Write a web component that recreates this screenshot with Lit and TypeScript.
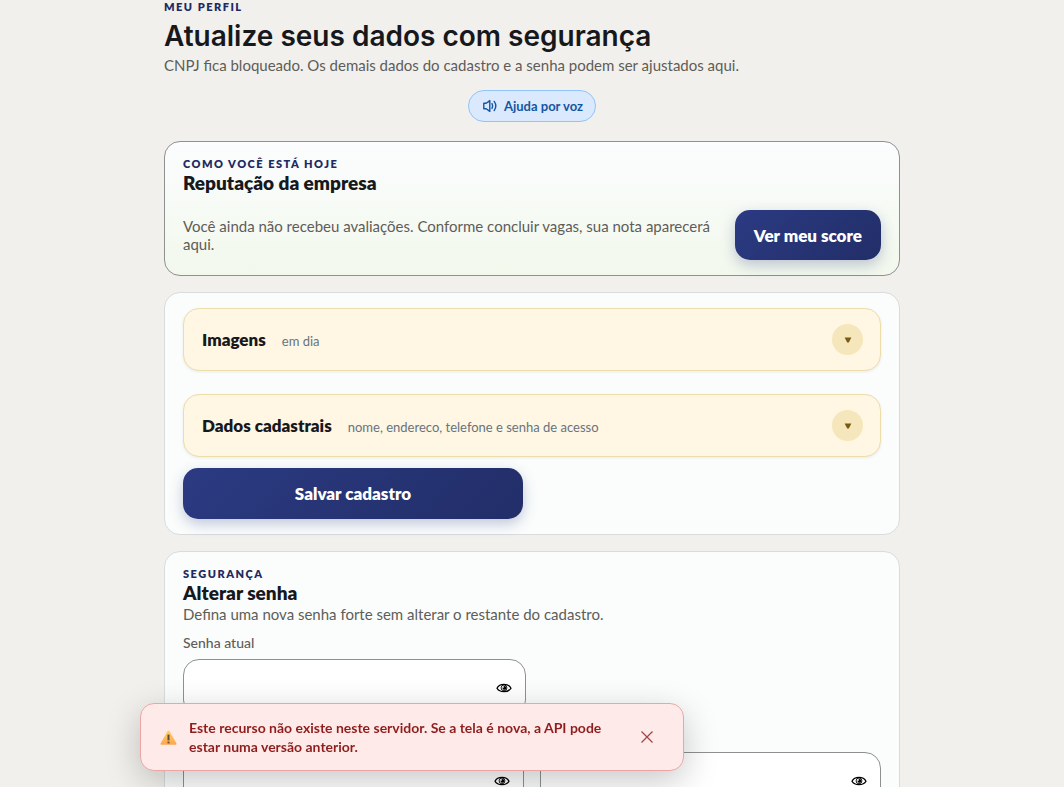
import { LitElement, html, css, svg, nothing } from "lit";
import { customElement, property, state } from "lit/decorators.js";

const speakerIcon = svg`<svg class="speaker" viewBox="0 0 16 16" width="16" height="16" fill="none" stroke="currentColor" stroke-width="1.4" stroke-linejoin="round" stroke-linecap="round" aria-hidden="true"><path d="M1.8 5.3H4.2L7.8 2.6V13.4L4.2 10.7H1.8Z"/><path d="M10 5.6Q11.4 8 10 10.4"/><path d="M12.2 3.4Q15.4 8 12.2 12.6"/></svg>`;

const eyeIcon = svg`<svg viewBox="0 0 16 10" width="16" height="10" aria-hidden="true"><path d="M1 5.2C3.6 0.2 12.4 0.2 15 5.2C12.4 9.8 3.6 9.8 1 5.2Z" fill="#fff" stroke="#000" stroke-width="1.3"/><circle cx="8" cy="4.9" r="2.9" fill="#fff" stroke="#000" stroke-width="0.9"/><circle cx="8.4" cy="4.9" r="1.9" fill="#000"/><circle cx="7.2" cy="4" r="0.8" fill="#fff"/></svg>`;

const warningIcon = svg`<svg viewBox="0 0 17 15" width="17" height="15" aria-hidden="true"><defs><linearGradient id="warn" x1="0" y1="0" x2="0" y2="1"><stop offset="0" stop-color="#ffd261"/><stop offset="1" stop-color="#ffa550"/></linearGradient></defs><path d="M8.5 0.4Q9 0.4 9.4 1L16.5 13.6Q16.8 14.6 15.9 14.7H1.1Q0.2 14.6 0.5 13.6L7.6 1Q8 0.4 8.5 0.4Z" fill="url(#warn)"/><path d="M7.5 4.6H9.5V10.4H7.5Z" fill="#5f4c3e"/><path d="M7.5 11.6H9.5V13.4H7.5Z" fill="#5f4c3e"/></svg>`;

const closeIcon = svg`<svg viewBox="0 0 12 12" width="12" height="12" stroke="currentColor" stroke-width="1.2" aria-hidden="true"><path d="M0.5 0.5L11.5 11.5M11.5 0.5L0.5 11.5"/></svg>`;

const base = css`
  *, *::before, *::after { box-sizing: border-box; }
  button, input { font: inherit; }
  button { cursor: pointer; }
  svg { display: block; }
`;

@customElement("accordion-row")
class AccordionRow extends LitElement {
  @property() heading = "";
  @property() hint = "";
  @property({ type: Boolean }) open = false;

  static styles = [base, css`
    :host { display: block; }
    .row {
      display: flex; align-items: center; justify-content: space-between;
      width: 100%; padding: 15px 17px 15px 18px; text-align: left;
      border: 1px solid #eddda9; border-radius: 16px;
      background: #fff6e3; box-shadow: 0 1px 3px rgba(20, 30, 60, 0.08);
    }
    .text { display: flex; align-items: baseline; gap: 16px; }
    .heading { font-size: 17px; font-weight: 800; line-height: 24px; color: #17181c; }
    .hint { font-size: 13px; color: #667480; }
    .mark {
      display: grid; place-items: center; width: 31px; height: 31px;
      border-radius: 50%; background: #f5e7bb; color: #7a5a10;
    }
  `];

  render() {
    return html`<button class="row" type="button" aria-expanded=${this.open ? "true" : "false"} @click=${() => (this.open = !this.open)}>
      <span class="text"><span class="heading">${this.heading}</span><span class="hint">${this.hint}</span></span>
      <span class="mark"><svg viewBox="0 0 8 6" width="8" height="6" aria-hidden="true"><path d="M0.6 0.4H7.4L4.8 5.6H3.2Z" fill="currentColor"/></svg></span>
    </button>`;
  }
}

@customElement("password-field")
class PasswordField extends LitElement {
  @property() label = "";
  @property() name = "";
  @state() private visible = false;

  static styles = [base, css`
    :host { display: block; }
    .label { display: block; height: 16px; margin-bottom: 8px; font-size: 14px; line-height: 16px; font-weight: 500; color: #5e5d59; }
    .box {
      display: flex; align-items: center; height: 57px; padding-right: 5px;
      border: 1px solid #8e9092; border-radius: 16px; background: #fff;
    }
    .input { flex: 1; min-width: 0; height: 100%; padding: 0 16px; border: 0; outline: 0; background: none; }
    .eye { display: grid; place-items: center; width: 32px; height: 32px; padding: 0; border: 0; background: none; }
  `];

  render() {
    return html`<label class="label" for="field">${this.label}</label>
      <div class="box">
        <input class="input" id="field" type=${this.visible ? "text" : "password"} aria-label=${this.name || nothing} />
        <button class="eye" type="button" aria-label="Mostrar senha" @click=${() => (this.visible = !this.visible)}>${eyeIcon}</button>
      </div>`;
  }
}

@customElement("app-root")
class AppRoot extends LitElement {
  @state() private toast = true;

  static styles = [base, css`
    :host {
      display: block; height: 100vh; overflow: hidden; padding: 0 24px;
      background: #f2f0ec; color: #17181c;
      font-family: Lato, "Liberation Sans", sans-serif;
    }
    .page { display: flex; flex-direction: column; gap: 16px; max-width: 736px; margin: 0 auto; }
    h1, h2, p { margin: 0; }
    .head { display: flex; flex-direction: column; padding-bottom: 3px; }
    .eyebrow { font-size: 11px; line-height: 14px; font-weight: 800; letter-spacing: 1.5px; text-transform: uppercase; color: #1d2b63; }
    .title { margin: 4px 0 2px; font-family: Inter, "Liberation Sans", sans-serif; font-size: 28px; line-height: 36px; font-weight: 600; }
    .lead { font-size: 15px; line-height: 18px; color: #5e5d59; }
    .voice {
      display: flex; align-items: center; gap: 6px; align-self: center; height: 32px;
      margin-top: 16px; padding: 0 12px 0 13px; border: 1px solid #90c4f9; border-radius: 16px;
      background: #dbe9fe; color: #1556a0; font-size: 13px; font-weight: 700;
    }
    .card { padding: 15px 18px; border: 1px solid #d9dcdd; border-radius: 16px; background: #fbfdfc; }
    .score { border-color: #8e9092; background: linear-gradient(180deg, #fbfdfe, #f2f8ec); }
    .score-row { display: flex; align-items: center; gap: 24px; margin-top: 15px; }
    .score-row .lead { flex: 1; }
    .subtitle { font-size: 19px; line-height: 24px; font-weight: 800; }
    .primary {
      height: 50px; padding: 0 19px; border: 0; border-radius: 15px; color: #fff;
      font-size: 17px; font-weight: 800; background: linear-gradient(135deg, #2b3a82, #222e68);
      box-shadow: 0 5px 14px rgba(43, 58, 130, 0.28);
    }
    .rows { display: grid; gap: 23px; margin-bottom: 11px; }
    .wide { width: calc(50% - 9px); height: 51px; }
    .fields { display: grid; grid-template-columns: 1fr 1fr; gap: 12px 16px; margin-top: 12px; }
    .current { grid-column: 1 / -1; width: calc(50% - 6px); }
    .toast {
      position: fixed; left: 140px; bottom: 16px; width: min(544px, calc(100vw - 160px));
      display: flex; align-items: center; gap: 12px; min-height: 68px; padding: 14px 18px 14px 19px;
      border: 1px solid #e9a6a4; border-radius: 14px; background: #feebe9; color: #8f1d1d;
      box-shadow: 0 10px 34px rgba(0, 0, 0, 0.22);
    }
    .message { flex: 1; font-size: 14px; line-height: 19px; font-weight: 700; }
    .close { display: grid; place-items: center; width: 36px; height: 32px; padding: 0; border: 0; background: none; color: #a34040; }
  `];

  render() {
    return html`
      <main class="page">
        <header class="head">
          <p class="eyebrow">Meu perfil</p>
          <h1 class="title">Atualize seus dados com segurança</h1>
          <p class="lead">CNPJ fica bloqueado. Os demais dados do cadastro e a senha podem ser ajustados aqui.</p>
          <button class="voice" type="button">${speakerIcon}<span>Ajuda por voz</span></button>
        </header>

        <section class="card score">
          <p class="eyebrow">Como você está hoje</p>
          <h2 class="subtitle">Reputação da empresa</h2>
          <div class="score-row">
            <p class="lead">Você ainda não recebeu avaliações. Conforme concluir vagas, sua nota aparecerá aqui.</p>
            <button class="primary" type="button">Ver meu score</button>
          </div>
        </section>

        <section class="card">
          <div class="rows">
            <accordion-row heading="Imagens" hint="em dia"></accordion-row>
            <accordion-row heading="Dados cadastrais" hint="nome, endereco, telefone e senha de acesso"></accordion-row>
          </div>
          <button class="primary wide" type="button">Salvar cadastro</button>
        </section>

        <section class="card">
          <p class="eyebrow">Segurança</p>
          <h2 class="subtitle">Alterar senha</h2>
          <p class="lead">Defina uma nova senha forte sem alterar o restante do cadastro.</p>
          <div class="fields">
            <password-field class="current" label="Senha atual"></password-field>
            <password-field name="Nova senha"></password-field>
            <password-field name="Confirmar nova senha"></password-field>
          </div>
        </section>
      </main>

      ${this.toast
        ? html`<div class="toast" role="alert">
            ${warningIcon}
            <p class="message">Este recurso não existe neste servidor. Se a tela é nova, a API pode estar numa versão anterior.</p>
            <button class="close" type="button" aria-label="Fechar" @click=${() => (this.toast = false)}>${closeIcon}</button>
          </div>`
        : ""}
    `;
  }
}
